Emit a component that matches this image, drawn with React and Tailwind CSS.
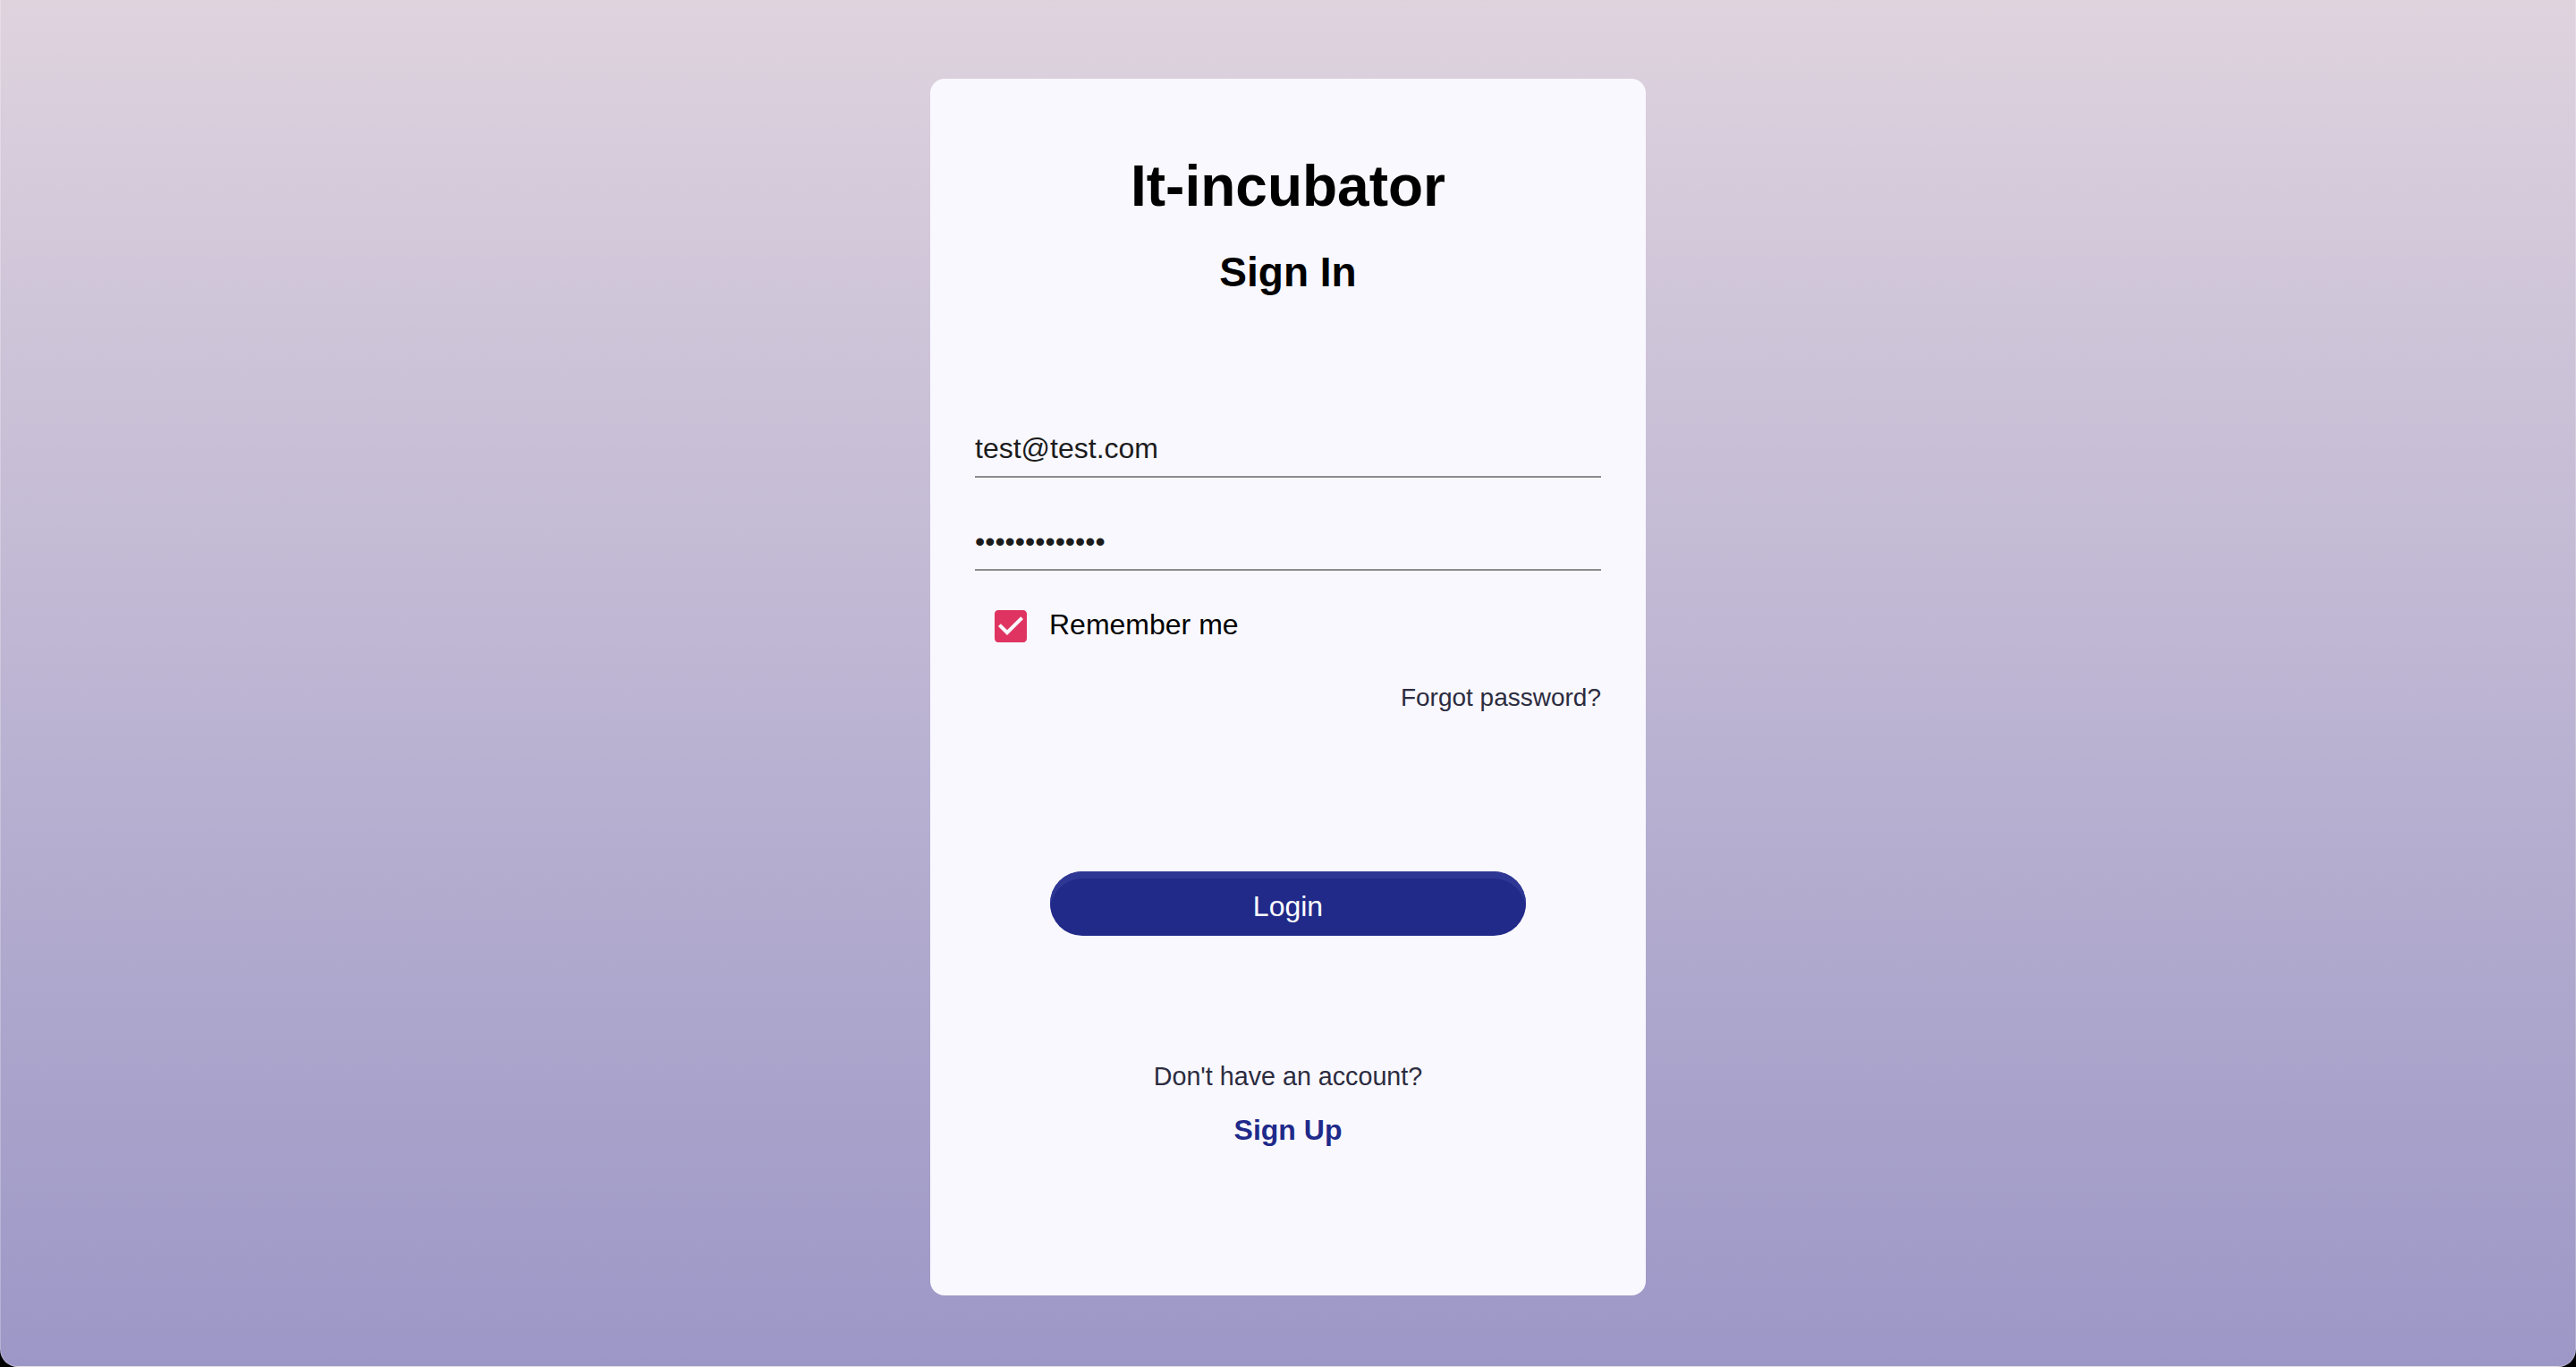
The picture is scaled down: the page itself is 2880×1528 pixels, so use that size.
import React from 'react';

// MUI-style filled checkbox glyph (box + tick cut out)
function CheckIcon() {
  return (
    <svg width={48} height={48} viewBox="0 0 24 24" className="shrink-0">
      <path
        fill="#df3461"
        d="M19 3H5c-1.11 0-2 .9-2 2v14c0 1.1.89 2 2 2h14c1.11 0 2-.9 2-2V5c0-1.1-.89-2-2-2zm-9 14l-5-5 1.41-1.41L10 14.17l7.59-7.59L19 8l-9 9z"
      />
    </svg>
  );
}

function App() {
  return (
    <div className="min-h-[1528px] bg-black font-['Liberation_Sans',Arial,sans-serif]">
      <div className="min-h-[1528px] flex justify-center pt-[88px] rounded-b-[20px] border-x border-b border-white/25 bg-gradient-to-b from-[#dfd3de] to-[#9c97c6]">
        <div className="w-[800px] h-[1360px] rounded-2xl bg-[#f9f8fe] px-[50px] pt-[88px] flex flex-col">
          <h1 className="text-[64px] leading-[64px] font-bold text-black text-center">
            It-incubator
          </h1>
          <h2 className="mt-[41px] text-[46px] leading-[46px] font-bold text-black text-center">
            Sign In
          </h2>

          {/* поля */}
          <div className="mt-[154px] pb-[11px] border-b-2 border-[#8c8c8c]">
            <input
              type="email"
              defaultValue="test@test.com"
              className="w-full h-[40px] bg-transparent outline-none text-[32px] text-[#1c1c1c]"
            />
          </div>
          <div className="mt-[51px] pb-[11px] border-b-2 border-[#8c8c8c]">
            <input
              type="password"
              defaultValue="1234567890123"
              className="w-full h-[40px] bg-transparent outline-none text-[32px] text-[#1c1c1c]"
            />
          </div>

          <label className="mt-[38px] h-[48px] flex items-center pl-[16px]">
            <CheckIcon />
            <span className="ml-[19px] pb-[4px] text-[32px] leading-[36px] text-black">
              Remember me
            </span>
          </label>

          <div className="mt-[40px] flex justify-end">
            <a className="text-[28px] leading-[32px] text-[#2c2c40] cursor-pointer">
              Forgot password?
            </a>
          </div>

          <button className="mt-[178px] self-center w-[532px] h-[72px] pt-[6px] rounded-full bg-[#212a89] shadow-[inset_0_8px_0_#2f3794] text-white text-[32px] leading-[36px]">
            Login
          </button>

          <p className="mt-[141px] text-center text-[28.7px] leading-[32px] text-[#2c2c40]">
            Don't have an account?
          </p>
          <a className="mt-[24px] self-center text-[32px] leading-[40px] font-bold text-[#1f2a8a] cursor-pointer">
            Sign Up
          </a>
        </div>
      </div>
    </div>
  );
}

export default App;
